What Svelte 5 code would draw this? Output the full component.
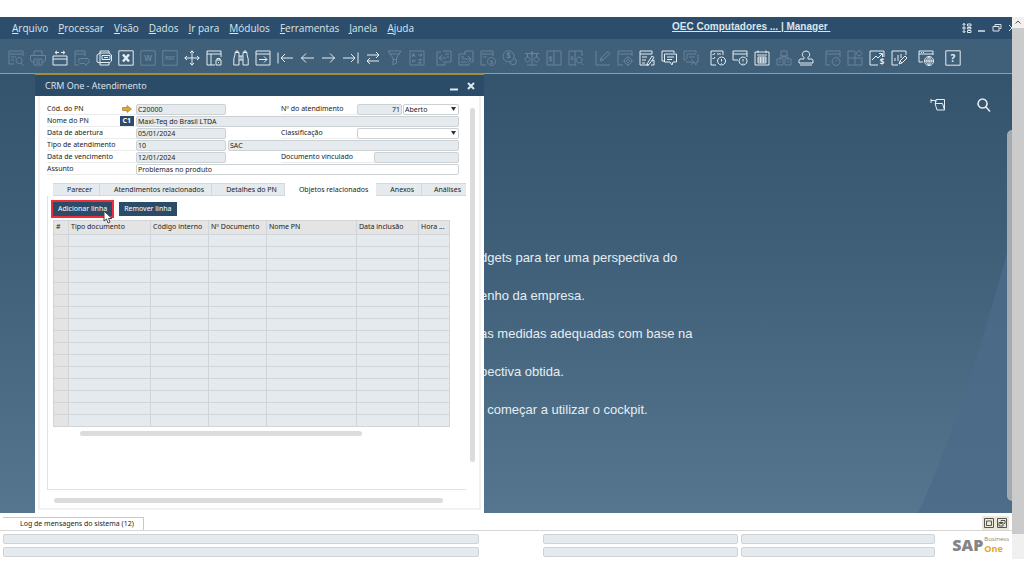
<script lang="ts">
  interface Icon {
    name: string;
    d: string;
    on?: boolean;
    text?: string;
    size?: number;
    x?: number;
    y?: number;
  }

  const menus = ['Arquivo', 'Processar', 'Visão', 'Dados', 'Ir para', 'Módulos', 'Ferramentas', 'Janela', 'Ajuda'];

  const groups: Icon[][] = [
    [
      { name: 'Visualizar', d: 'M6 14H1V1h14v5M1 4h14M3 7h5M3 10h3M11 7.5a3 3 0 1 0 .1 0M13 13l2.5 2.5' },
      { name: 'Imprimir', d: 'M4 5V1h8v4M4 12H2L.5 10V5.5h15V10L14 12h-2M4 9h8v6H4zM6 11h4M6 13h4' },
      { name: 'E-mail', on: true, d: 'M1 6h14v9H1zM1 9h14M3 2.5h4M5 .8L3 2.5 5 4.2M9 2.5h4M11 .8l2 1.7-2 1.7' },
      { name: 'SMS', d: 'M5 15H1V1h10v5M1 4h10M5 8.5h9l1.5 2-1.5 3h-1l-1 2-1.5-2H6l-1.5-2zM7.5 11h.6M10 11h.6M12.5 11h.6' },
      { name: 'Fax', on: true, d: 'M4 3V1h9v2M4 3h9l2.5 2v6L13 13v2H4v-2L1 12V5l3-2v10M6 5.5h8v4H6zM8 7.5h4M4 12.5h9' },
      { name: 'Excel', on: true, d: 'M.8 .8h14.4v14.4H.8z' },
      { name: 'Word', d: 'M.8 .8h14.4v14.4H.8z', text: 'W', size: 8 },
      { name: 'PDF', d: 'M.8 .8h14.4v14.4H.8z', text: 'PDF', size: 5, y: 10 },
      { name: 'Iniciar aplicação', on: true, d: 'M8 .8v14.4M.8 8h14.4M6 3l2-2.2L10 3M6 13l2 2.2 2-2.2M3 6L.8 8 3 10M13 6l2.2 2-2.2 2' },
      { name: 'Bloquear tela', on: true, d: 'M9 15H1V1h14v6M1 4h14M5 4v11M10 10h5v5h-5zM11 10V8.5h3V10M12.5 12v1' }
    ],
    [
      { name: 'Procurar', on: true, d: 'M2 4.5V2.5h4v3M10 5.5V2.5h4v2M2 4.5L.8 9v6H6V5.5M14 4.5L15.2 9v6H10V5.500M6 6h4M6 10h4M8 6v4M3 2.5V1h2v1.500M11 2.500V1h2v1.500' },
      { name: 'Adicionar', on: true, d: 'M1 1h14v14H1zM1 4h14M4 9.5h8M9 6.5l3 3-3 3' },
      { name: 'Primeiro', on: true, d: 'M1 2.5v11M4 8h12M8 4L4 8l4 4' },
      { name: 'Anterior', on: true, d: 'M2 8h13M7 3.5L2.5 8 7 12.5' },
      { name: 'Próximo', on: true, d: 'M1 8h13M9 3.5L13.5 8 9 12.5' },
      { name: 'Último', on: true, d: 'M15 2.5v11M0 8h12M8 4l4 4-4 4' },
      { name: 'Atualizar', on: true, d: 'M2 5h12M11 2l3 3-3 3M14 11H2M5 8l-3 3 3 3' },
      { name: 'Filtrar', d: 'M1 1h13l-4.5 7v5L6 15V8zM2.5 4h10M6 9.5h3.5' },
      { name: 'Classificar', d: 'M1 1h14v14H1zM9 5h4M11.5 3.5L13 5l-1.5 1.5M3 11h4M4.5 9.5L3 11l1.5 1.5M9.5 9.5h3l-3 3.5h3M3 7l1.5-4L6 7M3.5 5.5h2' }
    ],
    [
      { name: 'Documento base', d: 'M5 2H1v13h8v-2M7 1h8v11H7M9 4h4M11 7h2M3 8h7M6 5L3 8l3 3' },
      { name: 'Documento destino', d: 'M11 13v2H1V4h7M7 4V1h8v11h-3M3 7h3M3 12h6M4 9h9M10 6l3 3-3 3' },
      { name: 'Lucro bruto', d: 'M6 15H1V1h12v5M1 4h12M3 7h4M11.5 7.5a4 4 0 1 0 .1 0', text: '$', size: 6, x: 11.5, y: 14 },
      { name: 'Meios de pagamento', d: 'M6.5 .8a5.5 5.5 0 1 0 .1 0M12 8.5a3.2 3.2 0 1 1-4 3', text: '$', size: 8, x: 6.5, y: 9 },
      { name: 'Balanço', d: 'M1 3.5h14M8 1v14M3 15h10M3.5 3.5v4M12.5 3.5v4M3.5 7a2.5 2.5 0 1 0 .1 0M12.5 7a2.5 2.5 0 1 0 .1 0M8 2.5a1 1 0 1 0 .1 0' },
      { name: 'Lançamento', d: 'M1 1h14v14H1zM8 1v14', text: '$', size: 7, x: 4.5, y: 11 },
      { name: 'Consulta de lançamento', d: 'M8 15H1V1h13v5M7 1v14M11 7a3 3 0 1 0 .1 0M13 12.5l2.5 2.5', text: '$', size: 6, x: 4, y: 10 }
    ],
    [
      { name: 'Editor de layout', d: 'M1 1v14h14M5 11l1-3 7-6.5 2 2L8 10zM6 8l2 2' },
      { name: 'Configurar', d: 'M6 15H1V1h14v5M1 4h14M11 7.5a3.5 3.5 0 1 0 .1 0M11 9.5a1.5 1.5 0 1 0 .1 0M11 6v1.5M11 14.5V16M6 11h1.5M14.5 11H16' },
      { name: 'Editar formulário', on: true, d: 'M13 4V1H1v14h9M1 4h12M3 7h5M3 10h4M3 13h3M8 14l5-8 2 1.5-5 7-2 .8zM13 11l2-1v5h-3' },
      { name: 'Mensagens', on: true, d: 'M3 11H1V1h12v2M3.5 4h12v8H12l-1 3-2-3H3.5zM6 7h7M6 9.5h5' },
      { name: 'Alertas', d: 'M3 10H1V1h12v2M13 4H4v5M15 4v8h-2v3l-2-3M6 7h6M3 12h7M8 9.5l3 2.5-3 2.5' }
    ],
    [
      { name: 'Atividades', on: true, d: 'M6 15H1V1h12v4M2.5 4l1 1L5 3M7 4h4M2.5 8l1 1L5 7M11.5 7a4 4 0 1 0 .1 0M11.5 9v2.5M11.5 13v.6' },
      { name: 'Avisos', on: true, d: 'M6 10H1V1h14v6M1 4h14M11 7a4 4 0 1 0 .1 0M11 9v2.5M11 13v.6' },
      { name: 'Calendário', on: true, d: 'M1 2h14v13H1zM3 5h10M4 .5V3M12 .5V3M4 7h8v6H4zM6.7 7v6M9.3 7v6M4 9h8M4 11h8' },
      { name: 'Organograma', d: 'M5 1h6v5H5zM1 9h6v6H1zM9 9h6v6H9zM8 6v2M4 9V7h8v2M3 12h2M11 12h2' },
      { name: 'Autorização', on: true, d: 'M8 1a3.5 3.5 0 0 1 2 6.5v1.5h4l1 1.5V13H1v-2.5L2 9h4V7.5A3.5 3.5 0 0 1 8 1M2 15h12' }
    ],
    [
      { name: 'Painel', d: 'M5 15H1V1h14v6M1 4h14M11 7.5a4 4 0 1 0 .1 0M11 11.5l2-2M8.5 12h.8' },
      { name: 'Widgets', d: 'M7 1H1v14h14V8H1M8 1v14M12 .8a2.500 2.500 0 1 0 .1 0' },
      { name: 'Vendas', on: true, d: 'M9 15H1V1h14v6M3 10l4-4 2 2 4-4M10 3.5h3.5V7', text: '$', size: 8, x: 13, y: 15 },
      { name: 'Relatórios', on: true, d: 'M7 15H1V1h14v4M4 11V8M7 11V5M10 8V4M8 14l1-3 5-5 2 2-5 5zM9 11l2 2' }
    ],
    [{ name: 'Navegador', on: true, d: 'M5 12H1V1h14v4M1 4h14M3 2.5h1M5 2.5h1M11 6.5a4.5 4.5 0 1 0 .1 0M6.5 11h9M11 6.5v9M11 6.5c-3 2-3 7 0 9M11 6.5c3 2 3 7 0 9' }],
    [{ name: 'Ajuda', on: true, d: 'M.8 .8h14.4v14.4H.8z', text: '?', size: 10, y: 12 }]
  ];

  const tabs = ['Parecer', 'Atendimentos relacionados', 'Detalhes do PN', 'Objetos relacionados', 'Anexos', 'Análises'];
  let activeTab = $state('Objetos relacionados');

  const columns = ['#', 'Tipo documento', 'Código interno', 'Nº Documento', 'Nome PN', 'Data inclusão', 'Hora ...'];
  const rows = Array.from({ length: 16 }, (_, i) => i);

  const cockpit = [
    'dgets para ter uma perspectiva do',
    'enho da empresa.',
    'as medidas adequadas com base na',
    'pectiva obtida.',
    '\u00a0\u00a0começar a utilizar o cockpit.'
  ];
</script>

<div class="screen">
  <div class="app">
    <header class="menubar">
      <nav>
        {#each menus as menu}
          <a href="#menu"><u>{menu[0]}</u>{menu.slice(1)}</a>
        {/each}
      </nav>
      <a class="company" href="#company">OEC Computadores ... | Manager&nbsp;</a>
      <div class="window-controls">
        <button aria-label="Organizar">
          <svg width="10" height="10" viewBox="0 0 10 10"><path d="M2 0v10M.5 2L2 .5 3.5 2M.5 8L2 9.500 3.5 8M0 5h4M5.5 1h3.5v2H5.5zM5.5 4.5h3.5v1.5H5.5zM5.5 7.5h3.5v2H5.5z" /></svg>
        </button>
        <button aria-label="Minimizar">
          <svg width="10" height="10" viewBox="0 0 10 10"><path d="M1 8h7" stroke-width="1.5" /></svg>
        </button>
        <button aria-label="Restaurar">
          <svg width="10" height="10" viewBox="0 0 10 10"><path d="M3 3.5V1.5h6v4H7.5M1 3.5h6v4.5H1z" /></svg>
        </button>
        <button aria-label="Fechar">
          <svg width="10" height="10" viewBox="0 0 10 10"><path d="M2 2l6 6M8 2L2 8" /></svg>
        </button>
      </div>
    </header>

    <div class="toolbar">
      {#each groups as group}
        <div class="group">
          {#each group as icon}
            <button class:on={icon.on} aria-label={icon.name}>
              <svg width="16" height="16" viewBox="0 0 16 16">
                <path d={icon.d} />
                {#if icon.name === 'Excel'}
                  <path class="bold" d="M5 4.5l6 7M11 4.5l-6 7" />
                {/if}
                {#if icon.text}
                  <text x={icon.x ?? 8} y={icon.y ?? 11} font-size={icon.size}>{icon.text}</text>
                {/if}
              </svg>
            </button>
          {/each}
        </div>
      {/each}
    </div>

    <main class="desktop">
      <svg class="backdrop" viewBox="0 0 1012 440" preserveAspectRatio="none" aria-hidden="true">
        <path d="M918 440Q965 340 1012 160V440z" />
      </svg>
      <div class="cockpit-tools">
        <button aria-label="Abrir cockpit">
          <svg width="16" height="16" viewBox="0 0 16 16"><path d="M6 5V2.5h8.500V13L12.500 6.500H5L7 13h7.500M1 3.500h4.500v2.500M1 2v4" /></svg>
        </button>
        <button aria-label="Pesquisar">
          <svg width="16" height="16" viewBox="0 0 16 16"><path d="M6.5 2a4.500 4.500 0 1 0 .1 0M10 10l4 4.500" stroke-width="1.500" /></svg>
        </button>
      </div>
      <div class="cockpit">
        {#each cockpit as line}
          <p>{line}</p>
        {/each}
      </div>
      <div class="cockpit-scroll"></div>

      <section class="dialog">
        <div class="titlebar">
          <h1>CRM One - Atendimento</h1>
          <button aria-label="Minimizar janela">
            <svg width="10" height="10" viewBox="0 0 10 10"><path d="M1 8.5h8" stroke-width="2" /></svg>
          </button>
          <button aria-label="Fechar janela">
            <svg width="10" height="10" viewBox="0 0 10 10"><path d="M2 2l6 6M8 2L2 8" stroke-width="2" /></svg>
          </button>
        </div>

        <div class="body">
          <div class="content">
            <div class="form">
              <div class="row">
                <label for="cod">Cód. do PN
                  <svg class="link" width="10" height="8" viewBox="0 0 10 8"><path d="M.5 2.5h4.5V.5L9.5 4 5 7.5v-2H.5z" /></svg>
                </label>
                <input id="cod" class="short" value="C20000" readonly />
                <label class="second" for="num">Nº do atendimento</label>
                <input id="num" class="number" value="71" readonly />
                <select class="fill" aria-label="Status"><option>Aberto</option></select>
              </div>
              <div class="row">
                <label for="nome">Nome do PN <span class="chip">C1</span></label>
                <input id="nome" class="fill" value="Maxi-Teq do Brasil LTDA" readonly />
              </div>
              <div class="row">
                <label for="abertura">Data de abertura</label>
                <input id="abertura" class="short" value="05/01/2024" readonly />
                <label class="second" for="classe">Classificação</label>
                <select id="classe" class="fill"><option></option></select>
              </div>
              <div class="row">
                <label for="tipo">Tipo de atendimento</label>
                <input id="tipo" class="short" value="10" readonly />
                <input class="fill joined" aria-label="Descrição do tipo" value="SAC" readonly />
              </div>
              <div class="row">
                <label for="vencimento">Data de vencimento</label>
                <input id="vencimento" class="short" value="12/01/2024" readonly />
                <label class="second wide" for="doc">Documento vinculado</label>
                <input id="doc" class="fill" readonly />
              </div>
              <div class="row">
                <label for="assunto">Assunto</label>
                <input id="assunto" class="fill" value="Problemas no produto" />
              </div>
            </div>

            <div class="tabs" role="tablist">
              {#each tabs as tab}
                <button role="tab" aria-selected={tab === activeTab} class:active={tab === activeTab} onclick={() => (activeTab = tab)}>{tab}</button>
              {/each}
            </div>

            <div class="panel">
              <div class="actions">
                <button class="marked">Adicionar linha
                  <svg class="pointer" width="10" height="14" viewBox="0 0 10 14"><path d="M1 1v10l2.5-2 1.5 4 2-1-1.5-3.5H9z" /></svg>
                </button>
                <button>Remover linha</button>
              </div>
              <table>
                <colgroup>
                  <col class="c-index" /><col class="c-type" /><col class="c-code" /><col class="c-code" /><col class="c-name" /><col class="c-date" /><col />
                </colgroup>
                <thead>
                  <tr>
                    {#each columns as column}
                      <th>{column}</th>
                    {/each}
                  </tr>
                </thead>
                <tbody>
                  {#each rows as row (row)}
                    <tr>
                      {#each columns as column}
                        <td></td>
                      {/each}
                    </tr>
                  {/each}
                </tbody>
              </table>
              <div class="thumb table-thumb"></div>
            </div>
            <div class="thumb form-thumb"></div>
          </div>
          <div class="side-thumb"></div>
        </div>
      </section>
    </main>

    <div class="logbar">
      <button class="log">Log de mensagens do sistema (12)</button>
      <div class="log-controls">
        <button aria-label="Maximizar log">
          <svg width="10" height="10" viewBox="0 0 10 10"><path d="M.5 .5h9v9h-9zM2.5 3h5v4.5h-5z" /></svg>
        </button>
        <button aria-label="Destacar log">
          <svg width="10" height="10" viewBox="0 0 10 10"><path d="M.5 .5h9v9h-9zM4 3.5V2.5h4v3H7M2 4.5h4V8H2zM3 5.5h2" /></svg>
        </button>
      </div>
    </div>

    <footer class="statusbar">
      <div class="messages"><span></span><span></span></div>
      <div class="infos"><span></span><span></span><span></span><span></span></div>
      <div class="logo">
        <b>SAP</b>
        <div><small>Business</small><strong>One</strong></div>
      </div>
    </footer>
  </div>

  <div class="page-scroll">
    <svg width="12" height="11" viewBox="0 0 12 11"><path d="M3.5 6.5L6 4l2.5 2.5" /></svg>
    <div></div>
  </div>
</div>

<style>
  :global(body) {
    background: #fff;
  }

  .screen {
    display: flex;
    box-sizing: border-box;
    height: 100vh;
    padding: 17px 0;
    font-family: 'Noto Sans', 'Open Sans', sans-serif;
    font-size: 7px;
    line-height: 10px;
    color: #222;
  }

  .app {
    display: flex;
    flex: 1;
    flex-direction: column;
    min-width: 0;
    overflow: hidden;
  }

  button,
  input,
  select {
    box-sizing: border-box;
    margin: 0;
    border: 0;
    border-radius: 0;
    background: none;
    color: inherit;
    font: inherit;
    padding: 0;
  }

  svg {
    display: block;
    fill: none;
    stroke: currentColor;
  }

  .menubar {
    display: grid;
    grid-template-columns: 660px 1fr auto;
    align-items: center;
    height: 22px;
    background: #2c4e6c;
    color: #dbe5ec;
    padding-left: 12px;
  }

  nav {
    display: flex;
    gap: 10px;
    font-family: 'Open Sans', 'Noto Sans', sans-serif;
    font-size: 10px;
    line-height: 14px;
  }

  nav a {
    color: inherit;
    text-decoration: none;
  }

  .company {
    color: inherit;
    font-family: 'Liberation Sans', Arial, sans-serif;
    font-size: 10px;
    font-weight: 700;
    line-height: 14px;
    margin-bottom: 2px;
  }

  .window-controls {
    display: flex;
    gap: 5px;
    margin-right: -5px;
  }

  .toolbar {
    display: flex;
    gap: 11px;
    align-items: center;
    box-sizing: border-box;
    height: 35px;
    border-bottom: 1px solid #8ba0b0;
    background: #405f78;
    padding: 4px 8px 0;
  }

  .group {
    display: flex;
    gap: 6px;
  }

  .group button {
    color: #69849a;
  }

  .group .on {
    color: #e4edf2;
  }

  .group text {
    fill: currentColor;
    stroke: none;
    font-weight: 700;
    text-anchor: middle;
  }

  .group .bold {
    stroke-width: 2.5;
  }

  .desktop {
    position: relative;
    flex: 1;
    min-height: 0;
    background: linear-gradient(#34536c, #3f5f79 40%, #56768f);
    color: #e6edf2;
  }

  .backdrop {
    position: absolute;
    inset: 0;
    width: 100%;
    height: 100%;
    fill: #4b6b8a;
    stroke: none;
    opacity: 0.8;
  }

  .cockpit-tools {
    position: relative;
    display: flex;
    justify-content: flex-end;
    gap: 30px;
    padding: 23px 20px 0 0;
  }

  .cockpit {
    position: relative;
    padding: 126px 0 0 480px;
    font-family: 'Liberation Sans', Arial, sans-serif;
    font-size: 13px;
    line-height: 38px;
  }

  .cockpit p {
    margin: 0;
    white-space: nowrap;
  }

  .cockpit-scroll {
    position: absolute;
    top: 56px;
    right: 0;
    bottom: 12px;
    width: 5px;
    border-radius: 5px 0 0 5px;
    background: #a3abb1;
  }

  .dialog {
    position: absolute;
    top: -1px;
    bottom: 0;
    left: 35px;
    display: flex;
    flex-direction: column;
    box-sizing: border-box;
    width: 449px;
    border-top: 2px solid #a38d3c;
    background: #fff;
    color: #222;
  }

  .titlebar {
    display: flex;
    gap: 7px;
    align-items: center;
    height: 21px;
    background: #2b4c69;
    color: #e0e8ee;
    padding: 0 8px 0 10px;
  }

  h1 {
    flex: 1;
    margin: 0;
    font-family: 'Open Sans', 'Noto Sans', sans-serif;
    font-size: 9px;
    font-weight: 400;
    line-height: 14px;
  }

  .body {
    display: flex;
    flex: 1;
    gap: 4px;
    margin: 0 3px 3px;
    border: solid #f1f1f1;
    border-width: 0 2px 2px;
    padding: 7px 4px 5px 7px;
  }

  .content {
    display: flex;
    flex: 1;
    flex-direction: column;
    min-width: 0;
  }

  .form {
    padding-right: 7px;
  }

  .row {
    display: flex;
    align-items: center;
    height: 12px;
  }

  label {
    display: flex;
    justify-content: space-between;
    align-items: center;
    box-sizing: border-box;
    width: 89px;
    height: 11px;
    border-bottom: 1px solid #ececec;
    padding-right: 3px;
  }

  .second {
    width: 76px;
    margin-left: 55px;
  }

  .second.wide {
    width: 93px;
  }

  .link {
    fill: #e5a823;
    stroke: #8f6f2a;
    stroke-width: 0.6;
    margin-right: 1px;
  }

  .chip {
    background: #2b4c69;
    color: #fff;
    margin-right: -1px;
    padding: 0 3px;
    font-weight: 700;
  }

  input,
  select {
    height: 11px;
    min-width: 0;
    border: 1px solid #ccd1d4;
    border-radius: 2px;
    background: #fff;
    padding: 0 1px;
    line-height: 9px;
  }

  input:read-only {
    background: #e5eaee;
  }

  .short {
    width: 90px;
  }

  .number {
    width: 45px;
    margin-right: 1px;
    text-align: right;
  }

  .fill {
    flex: 1;
  }

  .joined {
    margin-left: 2px;
  }

  select {
    appearance: none;
    background: #fff
      url("data:image/svg+xml,%3Csvg xmlns='http://www.w3.org/2000/svg' width='5' height='4'%3E%3Cpath d='M0 0h5L2.5 4z' fill='%23333'/%3E%3C/svg%3E")
      no-repeat right 2px center;
  }

  .tabs {
    display: flex;
    margin: 8px 0 0 6px;
  }

  .tabs button {
    height: 13px;
    border: solid #d3d8db;
    border-width: 1px 1px 1px 0;
    background: #e5eaee;
    padding: 0 7px 0 14px;
    white-space: nowrap;
  }

  .tabs button:last-child {
    flex: 1;
    border-right: 0;
    padding: 0 5px 0 0;
    text-align: right;
  }

  .tabs .active {
    border-color: transparent;
    background: #fff;
  }

  .panel {
    flex: 1;
    border: solid #e2e2e2;
    border-width: 0 0 1px 1px;
    padding: 6px 16px 0 5px;
  }

  .actions {
    display: flex;
    gap: 7px;
  }

  .actions button {
    position: relative;
    height: 14px;
    background: #2b4c69;
    color: #fff;
    padding: 0 5px;
  }

  .marked {
    outline: 2px solid #ee2e38;
  }

  .pointer {
    position: absolute;
    top: 8px;
    right: -1px;
    fill: #fff;
    stroke: #444;
  }

  table {
    width: 100%;
    margin-top: 4px;
    border-collapse: collapse;
    table-layout: fixed;
  }

  th,
  td {
    box-sizing: border-box;
    height: 12px;
    border: 1px solid #cfd5d8;
    background: #e5eaee;
    padding: 0 0 0 2px;
    font-weight: 400;
    text-align: left;
    white-space: nowrap;
  }

  th {
    height: 14px;
    background: #e4e4e4;
    padding-bottom: 2px;
  }

  td:first-child {
    background: #e4e4e4;
  }

  .c-index {
    width: 15px;
  }

  .c-type {
    width: 82px;
  }

  .c-code {
    width: 58px;
  }

  .c-name {
    width: 90px;
  }

  .c-date {
    width: 62px;
  }

  .thumb {
    height: 5px;
    border-radius: 3px;
    background: #dcdcdc;
  }

  .table-thumb {
    width: 71%;
    margin: 4px 0 0 27px;
  }

  .form-thumb {
    margin: 8px 23px 0 7px;
  }

  .side-thumb {
    width: 5px;
    margin: 5px 0 41px;
    border-radius: 3px;
    background: #dcdcdc;
  }

  .logbar {
    display: flex;
    justify-content: space-between;
    align-items: flex-end;
    box-sizing: border-box;
    height: 18px;
    border-bottom: 1px solid #d6d6d6;
    background: #fff;
    padding: 0 3px;
  }

  .log {
    height: 13px;
    border: solid #c9c9c9;
    border-width: 1px 1px 0 0;
    padding: 0 9px 0 17px;
  }

  .log-controls {
    display: flex;
    gap: 3px;
    background: #ece9d8;
    color: #555;
    padding: 2px;
  }

  .statusbar {
    display: flex;
    align-items: center;
    height: 28px;
  }

  .messages,
  .infos {
    display: grid;
    gap: 3px;
  }

  .messages {
    flex: 476;
    margin: 0 64px 0 3px;
  }

  .infos {
    flex: 392;
    grid-template-columns: 1fr 1fr;
    margin-right: 17px;
  }

  .statusbar span {
    height: 8px;
    border: 1px solid #cdd3d6;
    border-radius: 2px;
    background: #e5eaee;
  }

  .logo {
    display: flex;
    gap: 1px;
    align-items: center;
    color: #858585;
    font-family: 'Open Sans', sans-serif;
    margin-right: 3px;
  }

  .logo b {
    font-size: 16px;
    font-weight: 800;
    line-height: 16px;
  }

  .logo div {
    display: grid;
  }

  .logo small {
    font-size: 6px;
    line-height: 8px;
  }

  .logo strong {
    color: #e5a823;
    font-size: 9px;
    line-height: 12px;
  }

  .page-scroll {
    width: 12px;
    background: #f0f0f0;
    color: #555;
  }

  .page-scroll div {
    height: calc(100% - 36px);
    background: #cbcbcb;
  }
</style>
